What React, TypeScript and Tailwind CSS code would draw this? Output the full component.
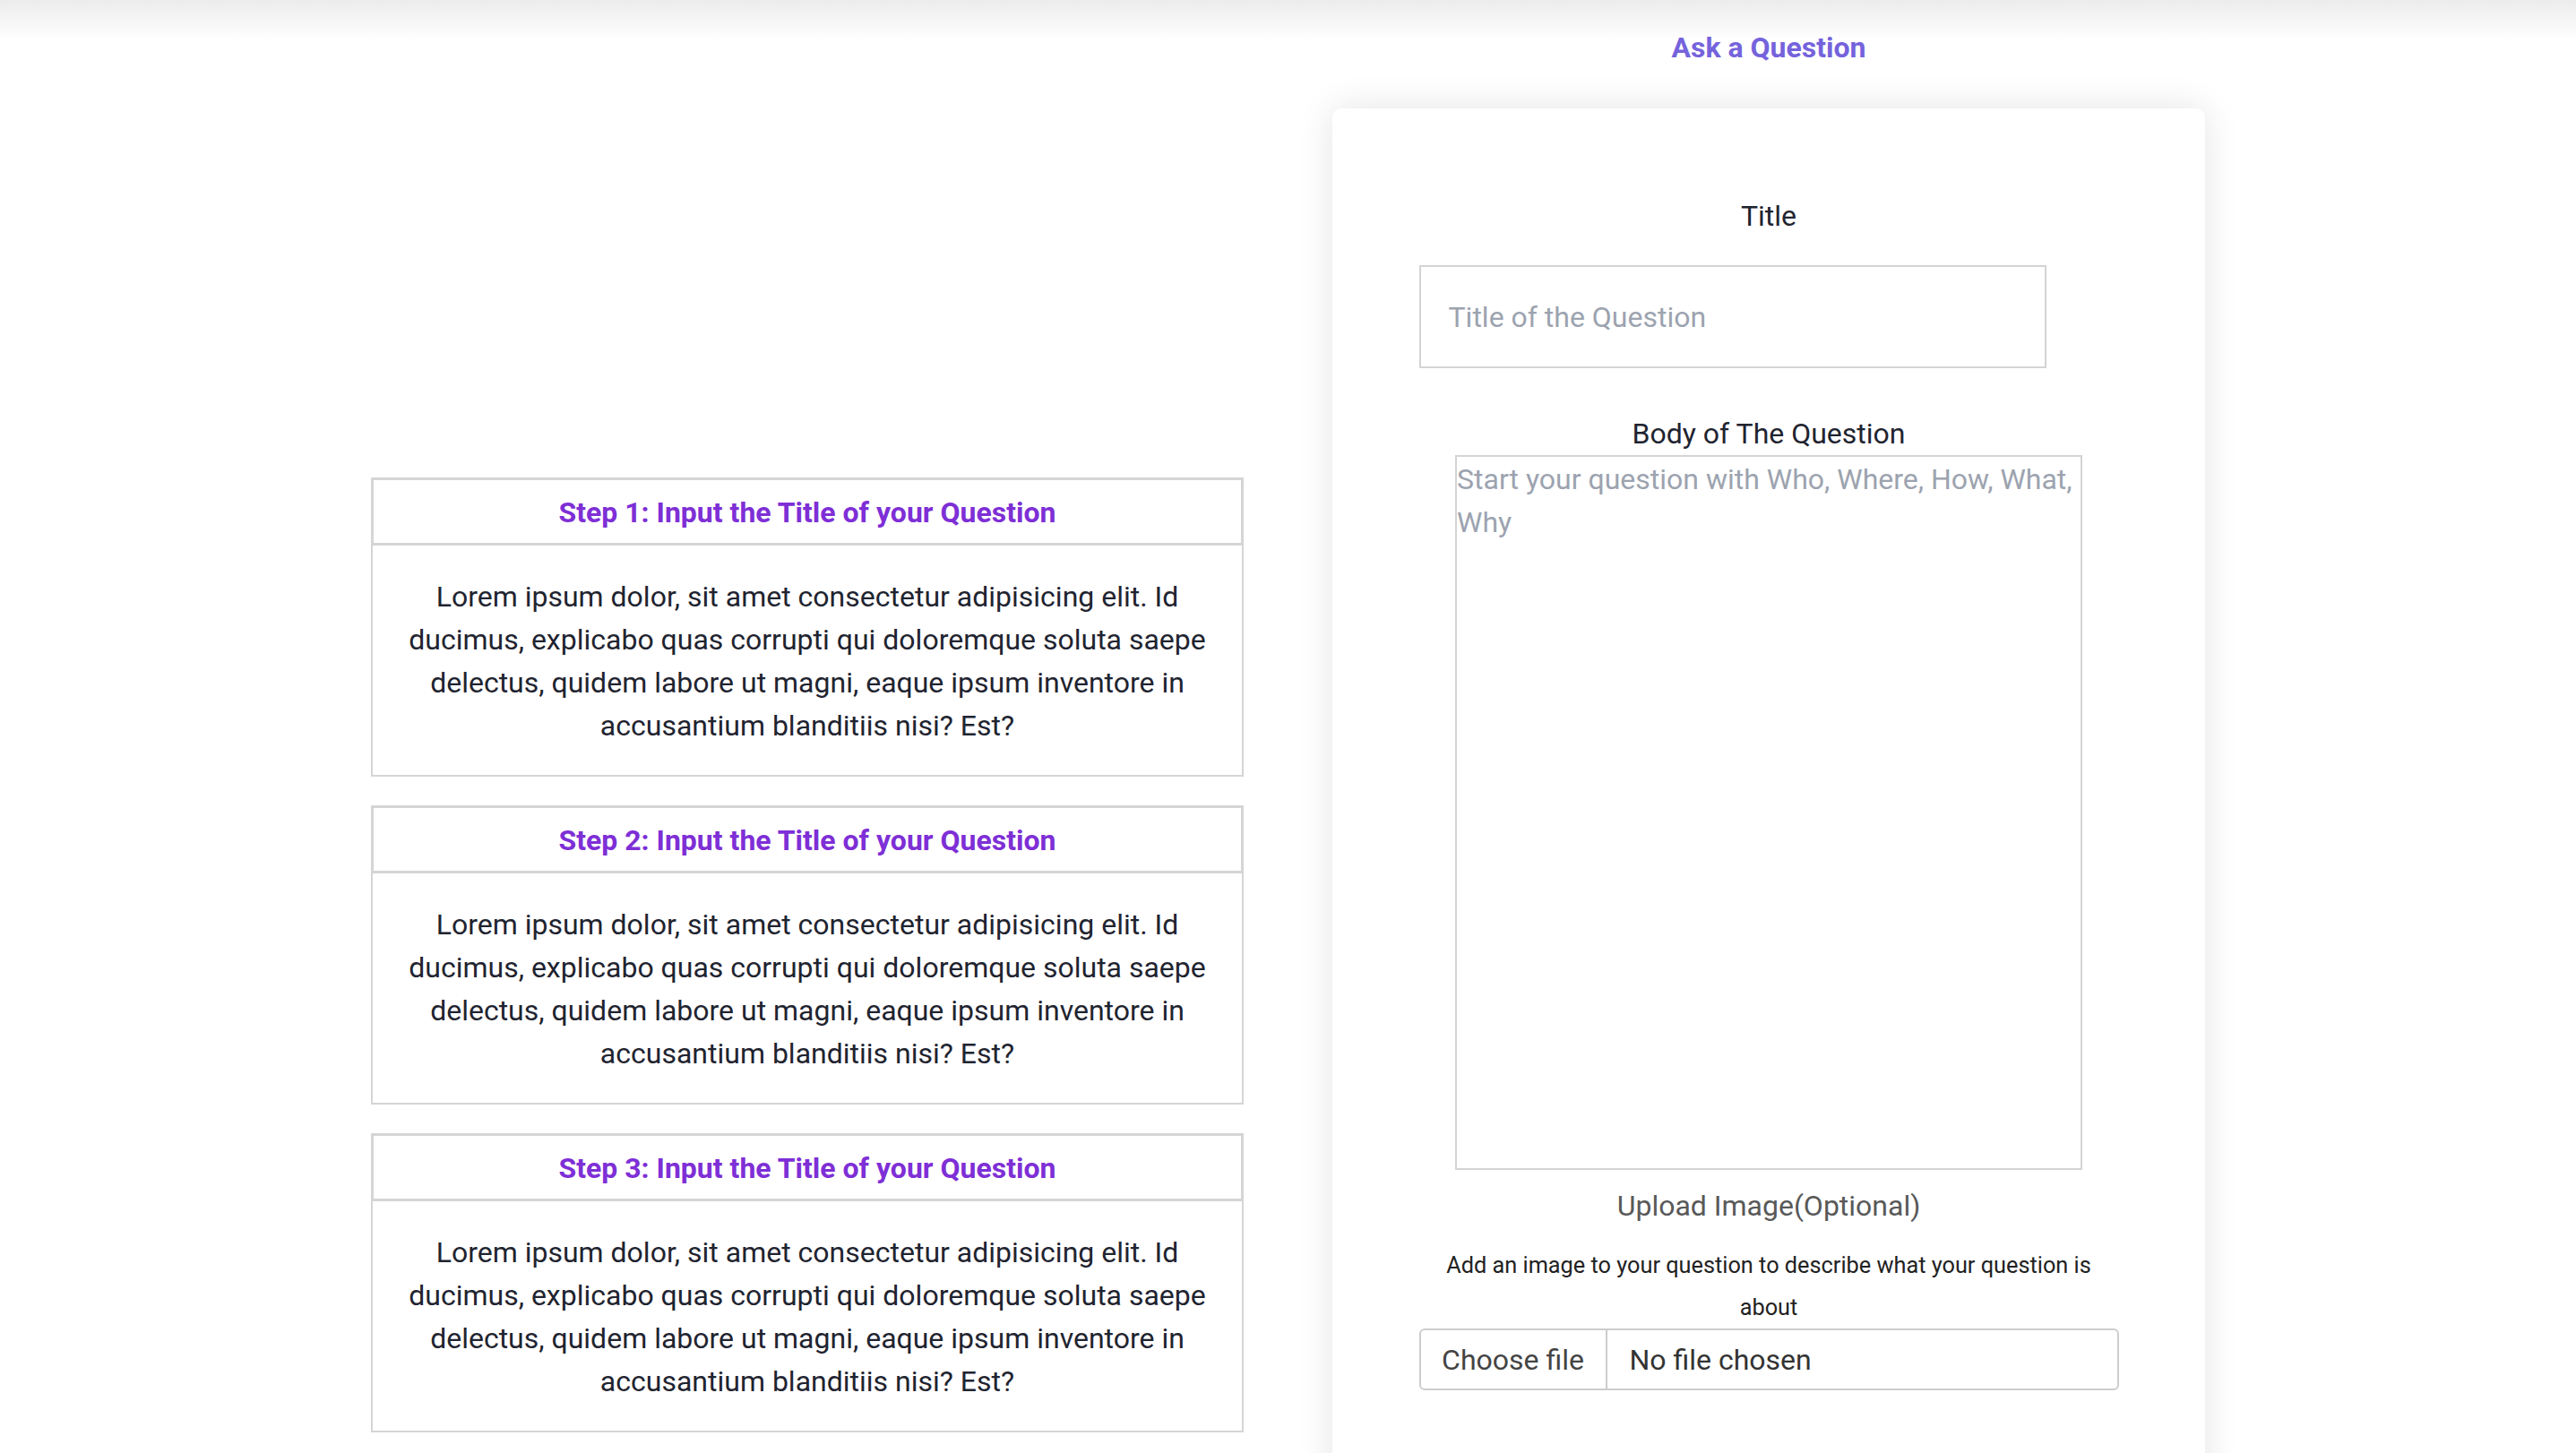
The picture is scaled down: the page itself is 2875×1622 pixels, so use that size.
import * as React from 'react';

const steps = [
  'Step 1: Input the Title of your Question',
  'Step 2: Input the Title of your Question',
  'Step 3: Input the Title of your Question',
];

const lorem =
  'Lorem ipsum dolor, sit amet consectetur adipisicing elit. Id ducimus, explicabo quas corrupti qui doloremque soluta saepe delectus, quidem labore ut magni, eaque ipsum inventore in accusantium blanditiis nisi? Est?';

const StepCard: React.FC<{ title: string }> = ({ title }) => {
  return (
    <div className="w-full">
      <div className="flex h-[76px] items-center justify-center border-[3px] border-[#d5d5d5] pt-[2px]">
        <h3 className="text-[32px] font-bold text-[#7e2fd6]">{title}</h3>
      </div>
      <div className="border-2 border-t-0 border-[#d5d5d5] px-6 pt-[33px] pb-[31px]">
        <p className="text-center text-[32px] leading-[48px] text-[#1f2430]">{lorem}</p>
      </div>
    </div>
  );
};

export default function App() {
  return (
    <div className="min-h-screen bg-[linear-gradient(to_bottom,#ececec,#ffffff_45px)] font-['Roboto','Liberation_Sans',sans-serif]">
      <div className="mx-auto grid w-[2047px] grid-cols-2 gap-x-[99px]">
        {/* steps */}
        <div className="flex flex-col gap-[32px] pt-[533px]">
          {steps.map((s) => (
            <StepCard key={s} title={s} />
          ))}
        </div>

        {/* form */}
        <div>
          <h1 className="pt-[33px] text-center text-[32px] leading-[40px] font-bold text-[#7563dc]">
            Ask a Question
          </h1>
          <div className="mt-[48px] rounded-[10px] bg-white pt-[102px] pb-[120px] shadow-[0_0_40px_rgba(0,0,0,0.11)]">
            <div className="mx-auto flex w-[781px] flex-col">
              <label className="text-center text-[32px] leading-[36px] text-[#1f2430]">Title</label>
              <input
                type="text"
                placeholder="Title of the Question"
                className="mt-[37px] h-[115px] w-[700px] border-2 border-[#d4d4d4] px-[31px] text-[32px] text-[#1f2430] outline-none placeholder:text-[#9ca3af]"
              />

              <label className="mt-[55px] text-center text-[32px] leading-[36px] text-[#1f2430]">
                Body of The Question
              </label>
              <textarea
                placeholder="Start your question with Who, Where, How, What, Why"
                className="mx-auto mt-[6px] h-[798px] w-[700px] resize-none border-2 border-[#d4d4d4] px-0 pt-[1px] pb-0 text-[32px] leading-[48px] text-[#1f2430] outline-none placeholder:text-[#9ca3af]"
              />

              <p className="mt-[22px] text-center text-[32px] leading-[36px] text-[#595959]">
                Upload Image(Optional)
              </p>
              <p className="mx-auto mt-[25px] max-w-[750px] text-center text-[25.3px] leading-[47px] text-[#222222]">
                Add an image to your question to describe what your question is about
              </p>

              <div className="flex h-[69px] w-[781px] items-stretch overflow-hidden rounded-[6px] border-2 border-[#cdcdcd] text-[32px]">
                <div className="flex w-[208px] items-center justify-center border-r-2 border-[#cdcdcd] text-[#444444]">
                  Choose file
                </div>
                <div className="flex items-center pl-[25px] text-[#333333]">No file chosen</div>
              </div>
            </div>
          </div>
        </div>
      </div>
    </div>
  );
}
